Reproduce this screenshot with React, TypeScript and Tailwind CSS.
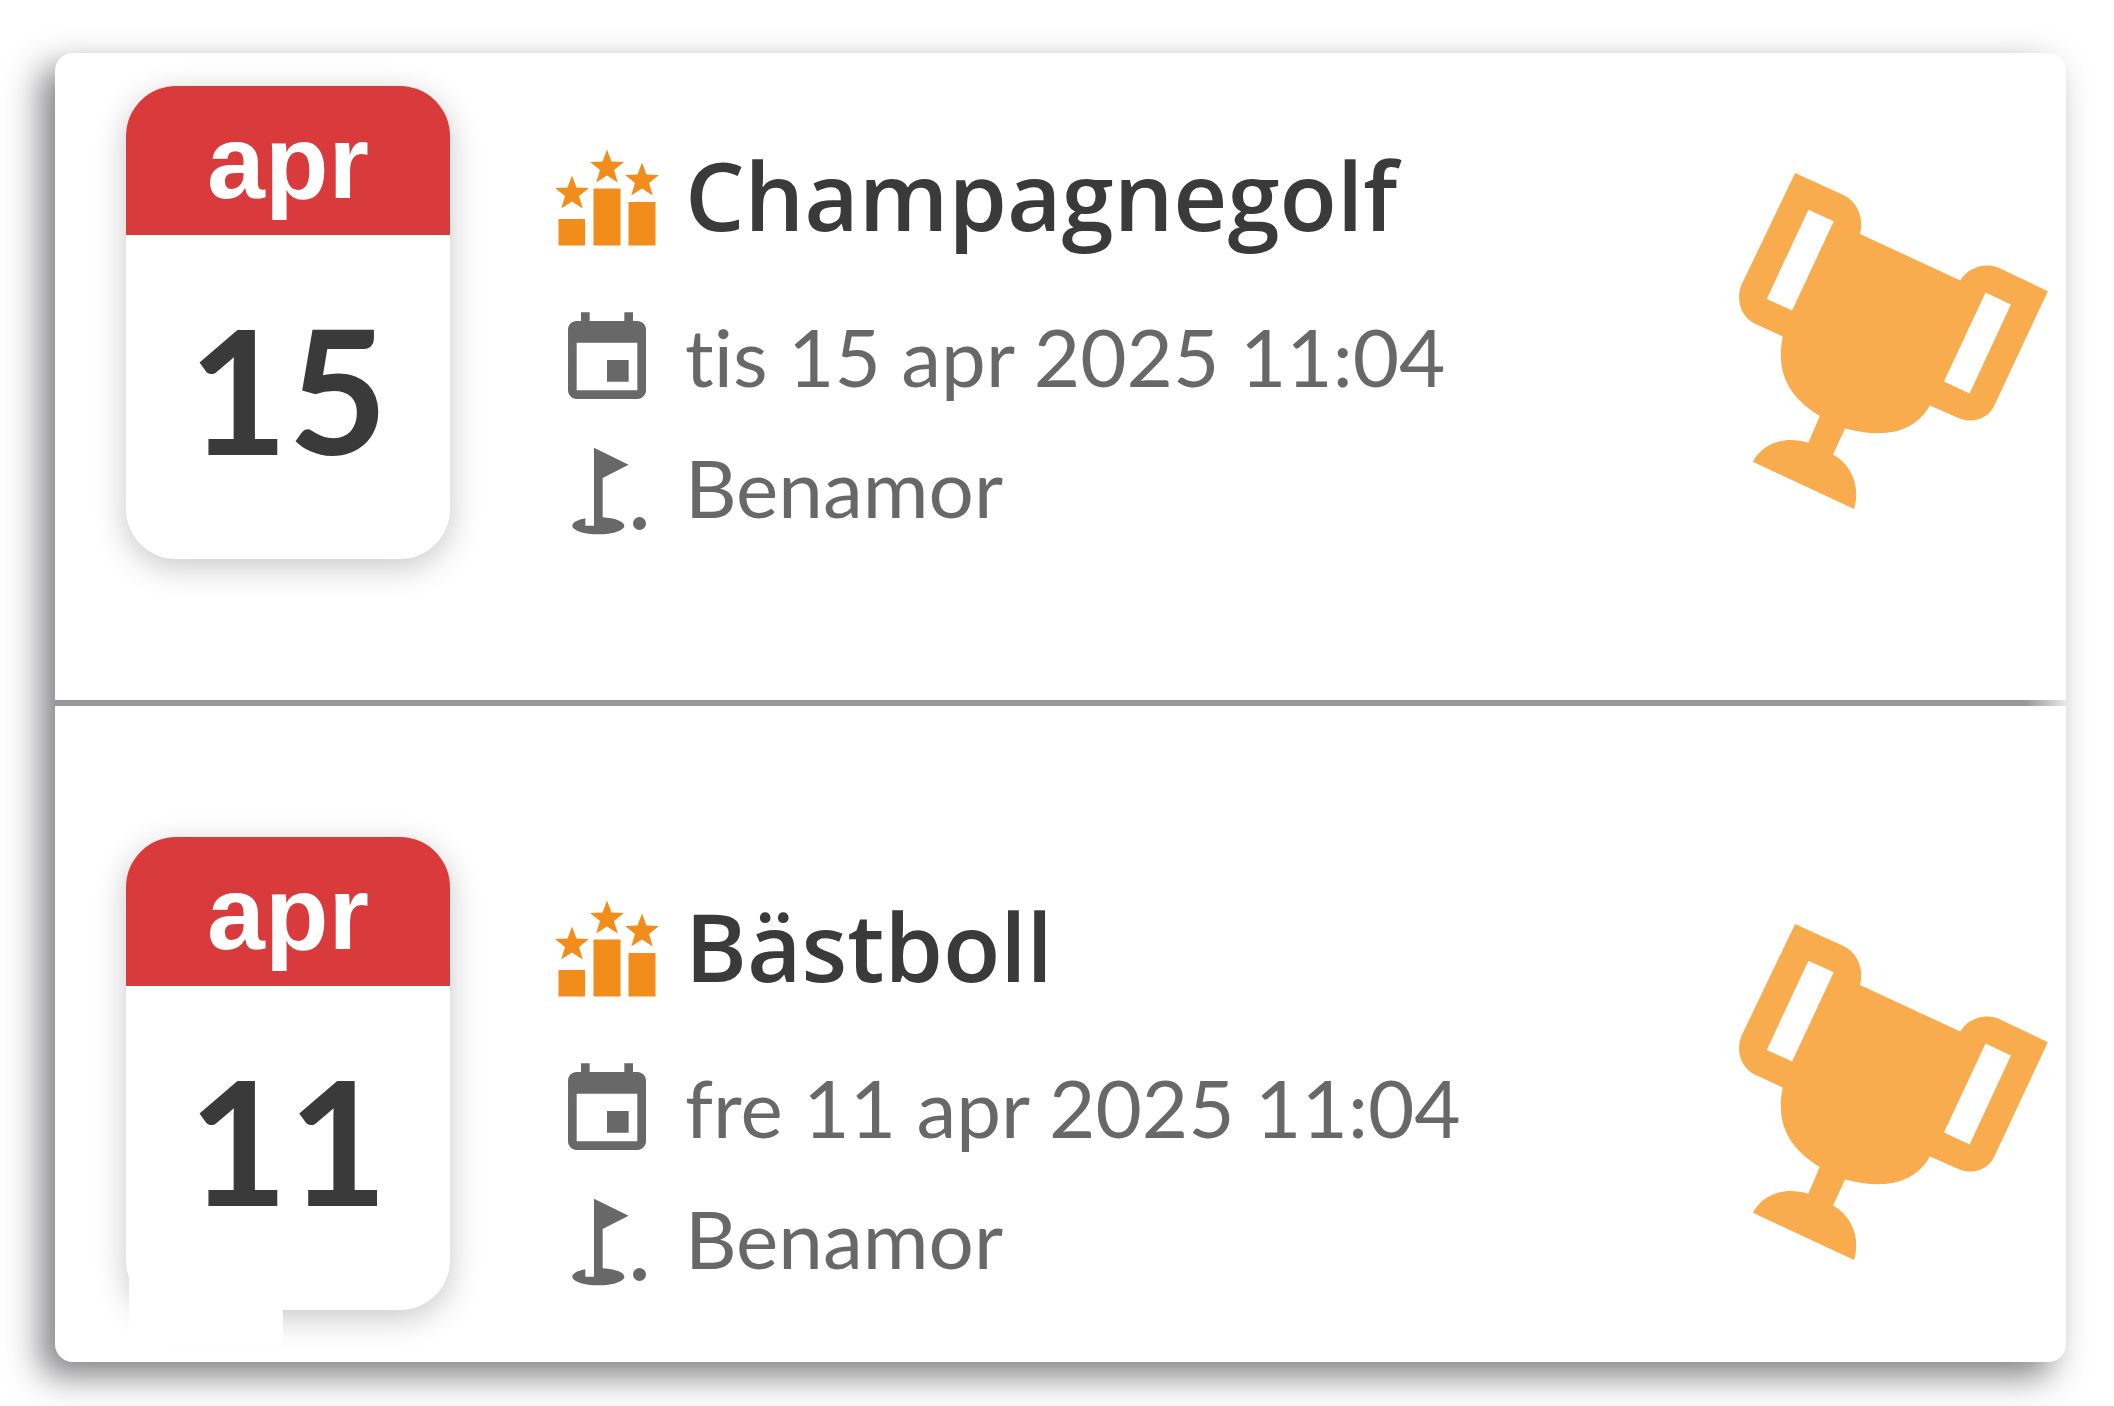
type Competition = {
  title: string;
  month: string;
  day: string;
  date: string;
  course: string;
};

const competitions: Competition[] = [
  { title: "Champagnegolf", month: "apr", day: "15", date: "tis 15 apr 2025 11:04", course: "Benamor" },
  { title: "Bästboll", month: "apr", day: "11", date: "fre 11 apr 2025 11:04", course: "Benamor" },
];

const STAR = "M0 -17.5 L4.5 -5.5 L17 -5 L7 3 L10.8 15.5 L0 8.5 L-10.8 15.5 L-7 3 L-17 -5 L-4.5 -5.5 Z";

function RankingIcon() {
  return (
    <svg viewBox="0 0 104 104" className="size-[104px] shrink-0 fill-[#f28c1a]" aria-hidden="true">
      <path d={STAR} transform="translate(17 50)" />
      <path d={STAR} transform="translate(52 24)" />
      <path d={STAR} transform="translate(87 37)" />
      <rect x="3.5" y="76" width="26.5" height="26.5" />
      <rect x="38.5" y="45.5" width="27" height="57" />
      <rect x="73.5" y="59" width="27" height="43.5" />
    </svg>
  );
}

function CalendarIcon() {
  return (
    <svg viewBox="0 0 24 24" className="size-[104px] shrink-0 fill-[#686868]" aria-hidden="true">
      <path d="M17 12h-5v5h5v-5zM16 1v2H8V1H6v2H5c-1.11 0-1.99.9-1.99 2L3 19c0 1.1.89 2 2 2h14c1.1 0 2-.9 2-2V5c0-1.1-.9-2-2-2h-1V1h-2zm3 18H5V8h14v11z" />
    </svg>
  );
}

function GolfIcon() {
  return (
    <svg viewBox="0 0 24 24" className="size-[104px] shrink-0 fill-[#686868]" aria-hidden="true">
      <circle cx="19.5" cy="19.5" r="1.5" />
      <path d="M17 5.92L9 2v18H7v-1.73c-1.79.35-3 .99-3 1.73 0 1.1 2.69 2 6 2s6-.9 6-2c0-.99-2.16-1.81-5-1.97V8.98l6-3.06z" />
    </svg>
  );
}

function TrophyIcon() {
  return (
    <svg viewBox="117 69 927 1009" className="h-[336px] w-[309px] fill-[#f8ac4e]" aria-hidden="true">
      <path
        fillRule="evenodd"
        d="M285 69 L430 135 C474 156 492 205 480 252 L781 392 C800 356 850 336 893 352 L1044 424 L883 768 C865 808 815 824 772 803 L690 767 C646 844 560 869 435 836 L399 914 C455 945 482 1010 462 1078 L158 936 C190 878 255 858 325 879 L359 799 C272 746 224 672 248 560 L165 522 C125 503 106 455 123 407 Z M325 179 L401 214 L276 482 L200 447 Z M857 428 L933 464 L809 731 L732 695 Z"
      />
    </svg>
  );
}

function DateCard({ month, day }: { month: string; day: string }) {
  return (
    <div className="flex h-[473px] w-[324px] shrink-0 flex-col overflow-hidden rounded-[50px] bg-white text-center shadow-[0_8px_32px_rgba(0,0,0,0.22)]">
      <div className="h-[149px] bg-[#d93a3c] font-['Liberation_Sans',sans-serif] text-[104px] leading-[152px] font-bold text-white">
        {month}
      </div>
      <div className="font-['Lato',sans-serif] text-[172px] leading-[308px] font-bold text-[#3a3a3a]">{day}</div>
    </div>
  );
}

function CompetitionRow({ item }: { item: Competition }) {
  return (
    <article className="flex items-start pr-[18px] pl-[71px]">
      <DateCard month={item.month} day={item.day} />
      <div className="ml-[105px] flex flex-1 flex-col pt-[57px] whitespace-nowrap">
        <div className="flex gap-[26px]">
          <RankingIcon />
          <h2 className="font-['Open_Sans',sans-serif] text-[94px] leading-[104px] font-semibold text-[#3a3a3a]">
            {item.title}
          </h2>
        </div>
        <div className="mt-[61px] flex flex-col gap-[27px] font-['Lato',sans-serif] text-[80px] leading-[96px] text-[#686868] [font-variant-ligatures:none]">
          <div className="flex gap-[26px]">
            <CalendarIcon />
            <time>{item.date}</time>
          </div>
          <div className="flex gap-[26px]">
            <GolfIcon />
            <span>{item.course}</span>
          </div>
        </div>
      </div>
      <div className="shrink-0 pt-[87px]">
        <TrophyIcon />
      </div>
    </article>
  );
}

export default function App() {
  return (
    <main className="bg-white pt-[53px] pr-12 pb-11 pl-[55px]">
      <div className="rounded-[18px] bg-white shadow-[-14px_14px_34px_rgba(56,56,62,0.64)]">
        <div className="pt-[33px] pb-[141px]">
          <CompetitionRow item={competitions[0]} />
        </div>
        <div className="h-[6px] bg-linear-to-r from-[#99999b] from-98% to-[#e8e8e8]" />
        <div className="relative pt-[131px] pb-[52px]">
          <CompetitionRow item={competitions[1]} />
          <div className="absolute bottom-4 left-[74px] h-[76px] w-[154px] bg-white" />
        </div>
      </div>
    </main>
  );
}
